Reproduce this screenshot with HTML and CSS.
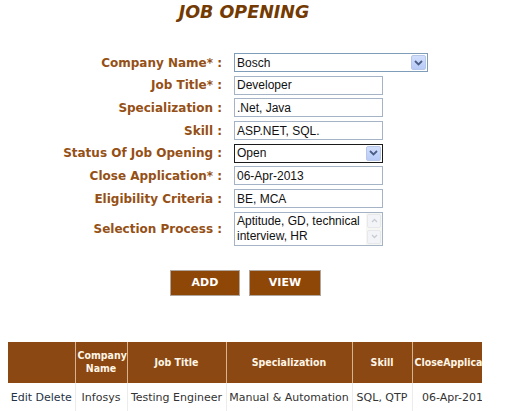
FILE: index.html
```html
<!DOCTYPE html>
<html>
<head>
<meta charset="utf-8">
<link rel="stylesheet" href="styles.css">
</head>
<body>
<div class="page">
  <h1 class="title">JOB OPENING</h1>
  <form class="form">
    <label class="lbl">Company Name* :</label>
    <div class="sel sel-wide">
      <select><option>Bosch</option></select>
      <span class="arrow"><svg width="9" height="6" viewBox="0 0 9 6"><path d="M1 1 L4.5 4.5 L8 1" fill="none" stroke="#4a5e86" stroke-width="1.8"/></svg></span>
    </div>

    <label class="lbl">Job Title* :</label>
    <input class="inp" type="text" value="Developer">

    <label class="lbl">Specialization :</label>
    <input class="inp" type="text" value=".Net, Java">

    <label class="lbl">Skill :</label>
    <input class="inp" type="text" value="ASP.NET, SQL.">

    <label class="lbl">Status Of Job Opening :</label>
    <div class="sel sel-focus">
      <select><option>Open</option></select>
      <span class="arrow"><svg width="9" height="6" viewBox="0 0 9 6"><path d="M1 1 L4.5 4.5 L8 1" fill="none" stroke="#4a5e86" stroke-width="1.8"/></svg></span>
    </div>

    <label class="lbl">Close Application* :</label>
    <input class="inp" type="text" value="06-Apr-2013">

    <label class="lbl">Eligibility Criteria :</label>
    <input class="inp" type="text" value="BE, MCA">

    <label class="lbl">Selection Process :</label>
    <div class="ta">
      <textarea>Aptitude, GD, technical interview, HR</textarea>
      <div class="sb">
        <span class="sb-btn"><svg width="7" height="5" viewBox="0 0 7 5"><path d="M1 4 L3.5 1.5 L6 4" fill="none" stroke="#c9ccd2" stroke-width="1.3"/></svg></span>
        <span class="sb-track"></span>
        <span class="sb-btn"><svg width="7" height="5" viewBox="0 0 7 5"><path d="M1 1 L3.5 3.5 L6 1" fill="none" stroke="#c9ccd2" stroke-width="1.3"/></svg></span>
      </div>
    </div>
  </form>

  <div class="actions">
    <button class="btn btn-add" type="button">ADD</button>
    <button class="btn btn-view" type="button">VIEW</button>
  </div>

  <div class="grid-wrap">
    <table class="grid">
      <colgroup>
        <col class="c1"><col class="c2"><col class="c3"><col class="c4"><col class="c5"><col class="c6">
      </colgroup>
      <thead>
        <tr>
          <th></th>
          <th>Company Name</th>
          <th>Job Title</th>
          <th>Specialization</th>
          <th>Skill</th>
          <th class="th-last">CloseApplication</th>
        </tr>
      </thead>
      <tbody>
        <tr>
          <td class="links">Edit Delete</td>
          <td>Infosys</td>
          <td>Testing Engineer</td>
          <td>Manual &amp; Automation</td>
          <td>SQL, QTP</td>
          <td>06-Apr-2013</td>
        </tr>
      </tbody>
    </table>
  </div>
</div>
</body>
</html>
```

FILE: styles.css
```css
* { box-sizing: border-box; }

body {
  margin: 0;
  background: #ffffff;
  font-family: "DejaVu Sans", Verdana, sans-serif;
}

.page {
  width: 513px;
}

.title {
  width: 488px;
  margin: 3px 0 0 0;
  text-align: center;
  font-size: 17.5px;
  line-height: 19px;
  font-weight: bold;
  font-style: italic;
  color: #733a03;
}

.form {
  display: grid;
  grid-template-columns: 214px auto;
  grid-template-rows: repeat(7, 19px) 34px;
  column-gap: 12px;
  row-gap: 3.7px;
  margin: 31px 0 0 8px;
  justify-items: start;
}

.lbl {
  justify-self: end;
  align-self: center;
  font-size: 12px;
  font-weight: bold;
  color: #955016;
  white-space: nowrap;
}

.inp {
  width: 149px;
  height: 19px;
  border: 1px solid #a5b3c6;
  padding: 0 2px;
  font-family: "Liberation Sans", Arial, sans-serif;
  font-size: 12px;
  color: #111;
  background: #fff;
  outline: none;
}

.sel {
  display: flex;
  align-items: center;
  height: 19px;
  width: 149px;
  border: 1px solid #7f9db9;
  background: #fff;
  padding-right: 1px;
}

.sel-wide { width: 194px; }

.sel-focus { border-color: #1b1b1b; }

.sel select {
  flex: 1;
  height: 100%;
  appearance: none;
  -webkit-appearance: none;
  border: none;
  background: transparent;
  padding: 0 2px;
  font-family: "Liberation Sans", Arial, sans-serif;
  font-size: 12px;
  color: #111;
  outline: none;
}

.arrow {
  width: 15px;
  height: 15px;
  display: flex;
  align-items: center;
  justify-content: center;
  background: linear-gradient(#d2defc, #b7cbf7);
  border: 1px solid #b7c7ea;
  border-radius: 2px;
}

.ta {
  display: flex;
  width: 149px;
  height: 34px;
  border: 1px solid #a5b3c6;
  background: #fff;
}

.ta textarea {
  flex: 1;
  border: none;
  resize: none;
  overflow: hidden;
  padding: 1px 2px;
  font-family: "Liberation Sans", Arial, sans-serif;
  font-size: 12px;
  line-height: 15px;
  color: #111;
  outline: none;
}

.sb {
  width: 16px;
  display: flex;
  flex-direction: column;
  background: #f6f6f3;
  padding: 1px;
}

.sb-btn {
  height: 14px;
  display: flex;
  align-items: center;
  justify-content: center;
  border: 1px solid #e6e8ec;
  border-radius: 2px;
  background: #f3f4f7;
}

.sb-track { flex: 1; }

.actions {
  display: flex;
  gap: 9px;
  margin: 24px 0 0 170px;
}

.btn {
  height: 26px;
  border: 1px solid #b0a69e;
  background: #8f4708;
  color: #ffffff;
  font-family: "DejaVu Sans", Verdana, sans-serif;
  font-size: 11px;
  font-weight: bold;
  padding: 0;
}

.btn-add { width: 70px; }
.btn-view { width: 72px; }

.grid-wrap {
  width: 474px;
  margin: 46px 0 0 8px;
  overflow: hidden;
}

.grid {
  table-layout: fixed;
  width: 492px;
  border-collapse: collapse;
  font-size: 11px;
}

.c1 { width: 67px; }
.c2 { width: 52px; }
.c3 { width: 99px; }
.c4 { width: 126px; }
.c5 { width: 60px; }
.c6 { width: 88px; }

.grid th {
  height: 41px;
  background: #8c4812;
  color: #fff6e6;
  font-family: "DejaVu Sans Condensed", "DejaVu Sans", sans-serif;
  font-weight: bold;
  font-size: 10.5px;
  line-height: 13px;
  text-align: center;
  padding: 0 2px;
  border-right: 1px solid #d8b48e;
}

.grid th.th-last {
  text-align: left;
  padding-left: 2px;
  white-space: nowrap;
}

.grid td {
  height: 30px;
  color: #333;
  text-align: center;
  white-space: nowrap;
  padding: 0 2px;
  border-right: 1px solid #ececec;
}

.grid td.links { color: #1f3447; }
```
